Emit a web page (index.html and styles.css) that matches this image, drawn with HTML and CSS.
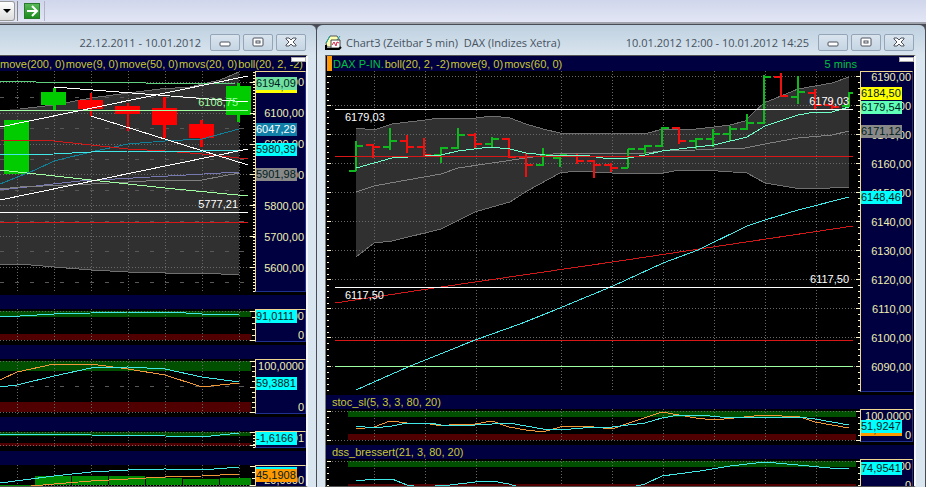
FILE: index.html
```html
<!doctype html>
<html lang="de">
<head>
	<meta charset="utf-8">
	<title>Chart3 DAX</title>
	<meta name="viewport" content="width=device-width">
	<link rel="stylesheet" href="styles.css">
</head>
<body>
	<div class="toolbar">
		<span class="combo"><select aria-label="Symbol"><option></option></select></span>
		<button class="go" aria-label="Los"><svg width="14" height="14" viewBox="0 0 14 14"><path d="M2 7h9M7 2l5 5-5 5" fill="none" stroke="#fff" stroke-width="2"/></svg></button>
	</div>

	<main class="workspace">
		<section class="window daily">
			<header class="titlebar">
				<span class="range">22.12.2011 - 10.01.2012</span>
				<button aria-label="Minimieren"><svg width="12" height="12" viewBox="0 0 12 12"><rect x="1" y="5" width="10" height="4" rx="1" class="glyph"/></svg></button>
				<button aria-label="Maximieren"><svg width="12" height="12" viewBox="0 0 12 12"><rect x="1" y="1" width="10" height="8" rx="1" class="glyph"/><rect x="4" y="4" width="4" height="2" class="glyph"/></svg></button>
				<button aria-label="Schließen"><svg width="12" height="12" viewBox="0 0 12 12"><path d="M1 1h3l2 2 2-2h3v1L8 5l3 3v1H8L6 7 4 9H1V8l3-3-3-3z" class="glyph"/></svg></button>
			</header>
			<div class="content">
				<div class="legend first">
					<span>move(20, 0)</span><span>move(200, 0)</span><span>move(9, 0)</span><span>move(50, 0)</span><span>movs(20, 0)</span><span>boll(20, 2, -2)</span>
					<i class="grip"></i>
				</div>
				<div class="pane">
					<div class="plot">
						<svg class="h224" viewBox="0 71 255 224" preserveAspectRatio="none">
							<path class="band" d="M0 110L20 109 54 105 91 98 128 93 160 89 190 87 220 80 239 72V275L202 273H165L128 272 91 270 54 267 20 264H0z"/>
							<path class="grid" d="M17 71V291M54 71V291M91 71V291M128 71V291M165 71V291M202 71V291M239 71V291M0 82H250M0 113H250M0 144H250M0 174H250M0 205H250M0 236H250M0 267H250"/>
							<path class="half" d="M0 97H250M0 128H250M0 159H250M0 190H250M0 221H250M0 251H250M0 282H250"/>
							<path class="edge" d="M20 109L54 105 91 98 128 93 160 89 190 87 220 80 239 72M0 264H20L54 267 91 270 128 272 165 273H202L239 275"/>
							<path class="up" d="M4 120H29V174H4zM41 92H66V105H41zM53 88H56V110H53zM226 86H251V115H226zM237 83H240V122H237z"/>
							<path class="down" d="M78 100H103V109H78zM90 93H92V116H90zM115 106H140V114H115zM127 103H129V131H127zM152 108H177V125H152zM163 97H166V138H163zM189 124H214V138H189zM200 120H203V147H200z"/>
							<path class="line teal" d="M0 184L35 170 54 161 91 152 128 144 165 141 202 139 239 129"/>
							<path class="line slate" d="M0 190L80 181 239 172"/>
							<path class="line grey" d="M0 189L20 187 91 184 128 182 165 180H202L239 173"/>
							<path class="line red" d="M0 140L54 141 128 149 165 151 202 154 239 158H248"/>
							<rect class="red-level" x="0" y="222" width="248" height="1"/>
							<path class="line cyan" d="M0 155L54 154 91 152 128 151H202L239 150"/>
							<path class="line mint" d="M0 81H35L36 82H145L146 83H235"/>
							<path class="line lime" d="M0 170L91 180 165 188 248 196"/>
							<rect class="lime-level" x="0" y="110" width="248" height="1"/>
							<path class="line white" d="M54 87L248 102M0 127L248 76M91 116L248 165M0 200L248 149"/>
							<rect class="white-level" x="0" y="212" width="248" height="1"/>
							<path class="minor" d="M254 72V293"/>
							<path class="major" d="M250 82H255M250 113H255M250 144H255M250 174H255M250 205H255M250 236H255M250 267H255"/>
						</svg>
						<span class="mark end lime-text" style="top:24px">6108,75</span>
						<span class="mark end" style="top:126px">5777,21</span>
					</div>
					<div class="scale">
						<ol class="prices step31">
							<li>6200,00</li><li>6100,00</li><li>6000,00</li><li>5900,00</li><li>5800,00</li><li>5700,00</li><li>5600,00</li>
						</ol>
						<span class="tag yellow" style="top:8px">6184,50</span>
						<span class="tag jade" style="top:5px">6194,09</span>
						<span class="tag blue" style="top:51px">6047,29</span>
						<span class="tag aqua" style="top:71px">5980,39</span>
						<span class="tag silver" style="top:96px">5901,98</span>
					</div>
				</div>
				<div class="legend"></div>
				<div class="pane">
					<div class="plot">
						<svg class="h36" viewBox="0 309 255 36" preserveAspectRatio="none">
							<path class="over" d="M0 311H251V317H0z"/>
							<path class="under" d="M0 334H251V340H0z"/>
							<path class="grid" d="M17 309V342M54 309V342M91 309V342M128 309V342M165 309V342M202 309V342M239 309V342M0 311H250M0 340H250"/>
							<path class="line cyan" d="M0 317L20 316 54 314 91 313 128 312H170L202 314H239"/>
							<path class="major" d="M250 311H255M252 317H255M252 323H255M252 329H255M252 335H255M250 340H255"/>
						</svg>
					</div>
					<div class="scale">
						<ol class="prices spread"><li>100,0000</li><li>0</li></ol>
						<span class="tag aqua" style="top:0px">91,0111</span>
					</div>
				</div>
				<div class="legend"></div>
				<div class="pane">
					<div class="plot">
						<svg class="h58" viewBox="0 359 255 58" preserveAspectRatio="none">
							<path class="over" d="M0 361H251V371H0z"/>
							<path class="under" d="M0 402H251V412H0z"/>
							<path class="grid" d="M17 359V414M54 359V414M91 359V414M128 359V414M165 359V414M202 359V414M239 359V414M0 361H250M0 412H250"/>
							<path class="half" d="M0 386H250"/>
							<path class="line orange" d="M0 380L17 372 54 364H91L128 369 165 375 202 387 239 383"/>
							<path class="line cyan" d="M0 387L17 385 54 376 91 368 128 367 165 369 202 377 239 382"/>
							<path class="major" d="M250 361H255M252 366H255M252 371H255M252 376H255M252 381H255M250 387H255M252 392H255M252 397H255M252 402H255M252 407H255M250 412H255"/>
						</svg>
					</div>
					<div class="scale">
						<ol class="prices spread"><li>100,0000</li><li>0</li></ol>
						<span class="tag aqua" style="top:17px">59,3881</span>
					</div>
				</div>
				<div class="legend"></div>
				<div class="pane">
					<div class="plot">
						<svg class="h20" viewBox="0 431 255 20" preserveAspectRatio="none">
							<path class="over" d="M0 432H251V436H0z"/>
							<path class="under" d="M0 443H251V446H0z"/>
							<path class="grid" d="M17 431V449M54 431V449M91 431V449M128 431V449M165 431V449M202 431V449M239 431V449M0 432H250M0 445H250"/>
							<path class="line cyan" d="M0 434H60L91 435 165 436 202 437 239 433"/>
							<path class="minor" d="M254 432V449"/>
							<path class="major" d="M250 432H255M250 445H255"/>
						</svg>
					</div>
					<div class="scale">
						<ol class="prices spread"><li>-4,0001</li></ol>
						<span class="tag aqua" style="top:0px">-1,6166</span>
					</div>
				</div>
				<div class="legend"></div>
				<div class="pane">
					<div class="plot">
						<svg class="h36" viewBox="0 465 255 36" preserveAspectRatio="none">
							<path class="grid" d="M17 465V501M54 465V501M91 465V501M128 465V501M165 465V501M202 465V501M239 465V501M0 485H250"/>
							<path class="volume" d="M0 485H34V487H0zM35 476H71V485H35zM72 476H108V485H72zM109 476H145V485H109zM146 478H182V485H146zM183 479H219V485H183zM220 478H251V485H220z"/>
							<path class="line cyan" d="M0 483L54 476 91 472 128 470 165 469 202 470 239 467"/>
							<path class="line orange" d="M0 487H20L54 484 91 481 128 479 165 477 202 476 239 474"/>
							<path class="major" d="M250 466H255M252 472H255M252 478H255M250 485H255"/>
						</svg>
					</div>
					<div class="scale">
						<ol class="prices low"><li>20,0000</li></ol>
						<span class="tag aqua" style="top:1px">50,5170</span>
						<span class="tag amber" style="top:3px">45,1908</span>
					</div>
				</div>
			</div>
		</section>

		<section class="window intraday">
			<header class="titlebar">
				<svg class="appicon" width="17" height="16" viewBox="0 0 17 16"><path d="M5 1h7l2 3v8H2L1 8z" fill="#ffffb0" stroke="#555"/><path d="M1 8l4-7M15 1l-3 4" fill="none" stroke="#1aa"/><path d="M6 5h9v8H6z" fill="#fff" stroke="#444"/><path d="M1 10v4h13l2-2" fill="none" stroke="#000" stroke-width="2"/><path d="M7 10l2-3 2 4 1-4 2 1" fill="none" stroke="#d24"/></svg>
				<h1>Chart3 (Zeitbar 5 min)&nbsp; DAX (Indizes Xetra)</h1>
				<span class="range">10.01.2012 12:00 - 10.01.2012 14:25</span>
				<button aria-label="Minimieren"><svg width="12" height="12" viewBox="0 0 12 12"><rect x="1" y="5" width="10" height="4" rx="1" class="glyph"/></svg></button>
				<button aria-label="Maximieren"><svg width="12" height="12" viewBox="0 0 12 12"><rect x="1" y="1" width="10" height="8" rx="1" class="glyph"/><rect x="4" y="4" width="4" height="2" class="glyph"/></svg></button>
				<button aria-label="Schließen"><svg width="12" height="12" viewBox="0 0 12 12"><path d="M1 1h3l2 2 2-2h3v1L8 5l3 3v1H8L6 7 4 9H1V8l3-3-3-3z" class="glyph"/></svg></button>
			</header>
			<div class="content">
				<div class="legend first">
					<b class="swatch"></b><span class="symbol">DAX P-IN.</span><span>boll(20, 2, -2)</span><span>move(9, 0)</span><span>movs(60, 0)</span>
					<span class="interval">5 mins</span>
					<i class="grip"></i>
				</div>
				<div class="pane">
					<div class="plot">
						<svg class="h324" viewBox="326 71 534 324" preserveAspectRatio="none">
							<path class="band" d="M356 128L374 130 392 124 425 120 440 118H476L492 116 510 118 526 124 543 129 560 133 577 134 612 133H648L663 129H696L714 127 730 125 745 121 755 111 764 103 781 96 798 89 815 86 832 83 849 77V187L830 188H795L765 183 747 173 703 170H680L663 173H612L577 171 560 173 527 191 510 202 492 207 475 212 441 229 392 241 374 243 356 257z"/>
							<path class="grid" d="M374 71V392M425 71V392M476 71V392M561 71V392M612 71V392M663 71V392M714 71V392M765 71V392M816 71V392M332 76H856M332 105H856M332 134H856M332 163H856M332 192H856M332 221H856M332 250H856M332 279H856M332 308H856M332 337H856M332 366H856"/>
							<path class="edge" d="M356 128L374 130 392 124 425 120 440 118H476L492 116 510 118 526 124 543 129 560 133 577 134 612 133H648L663 129H696L714 127 730 125 745 121 755 111 764 103 781 96 798 89 815 86 832 83 849 77M356 257L374 243 392 241 441 229 475 212 492 207 510 202 527 191 560 173 577 171 612 173H663L680 170H703L747 173 765 183 795 188H830L849 187"/>
							<path class="line grey" d="M356 192L374 186 407 180 441 174 458 168 492 163 526 158 560 153H645L662 151 696 150 714 149 745 148 765 144 798 138 832 135 849 131"/>
							<!-- open / high-low / close -->
							<path class="bar green" d="M349 171H356M356 141V171M356 146H363M383 147H390M390 128V150M390 141H397M434 155H441M441 147V163M441 148H448M451 148H458M458 128V149M458 135H465M485 144H492M492 137V148M492 139H499M536 165H543M543 148V166M543 155H550M553 158H560M560 155V167M560 155H567M621 168H628M628 149V168M628 149H635M638 149H645M645 145V154M645 146H652M655 146H662M662 127V147M662 128H669M689 141H696M696 138V149M696 139H703M706 139H713M713 129V147M713 134H720M723 134H730M730 126V141M730 129H737M740 129H747M747 114V130M747 123H754M757 123H764M764 75V124M764 77H771M791 97H798M798 76V104M798 92H805M842 106H849M849 92V107M849 93H853"/>
							<path class="bar scarlet" d="M366 145H373M373 144V158M373 147H380M400 141H407M407 135V153M407 147H414M417 147H424M424 138V156M424 155H431M468 135H475M475 133V148M475 144H482M502 139H509M509 138V158M509 157H516M519 157H526M526 153V177M526 165H533M570 156H577M577 154V164M577 161H584M587 161H594M594 160V178M594 165H601M604 165H611M611 163V172M611 168H618M672 128H679M679 127V144M679 141H686M774 77H781M781 73V97M781 96H788M808 93H815M815 89V110M815 105H822M825 105H832M832 100V109M832 107H839"/>
							<path class="line sea" d="M356 168L374 163 392 158 441 155 458 151 490 147 510 149 526 153 545 155 590 156 609 159 628 158 645 155 662 151 696 147 714 145 747 137 765 126 798 115 815 112H832L849 107"/>
							<path class="line red" d="M335 303L441 287 626 260 853 226"/>
							<rect class="red-level" x="335" y="156" width="518" height="1"/>
							<rect class="red-level" x="335" y="340" width="518" height="1"/>
							<path class="line cyan" d="M356 390L374 382 408 367 475 340 520 324 555 310 613 286 663 263 698 250 747 226 765 220 798 210 849 197"/>
							<rect class="lime-level" x="335" y="366" width="518" height="1"/>
							<rect class="white-level" x="335" y="109" width="518" height="1"/>
							<rect class="white-level" x="335" y="287" width="518" height="1"/>
							<path class="minor wide" d="M328 76V392M859 76V392"/>
							<path class="major" d="M327 76H331M327 105H331M327 134H331M327 163H331M327 192H331M327 221H331M327 250H331M327 279H331M327 308H331M327 337H331M327 366H331M856 76H860M856 105H860M856 134H860M856 163H860M856 192H860M856 221H860M856 250H860M856 279H860M856 308H860M856 337H860M856 366H860"/>
						</svg>
						<span class="mark start" style="top:39px">6179,03</span>
						<span class="mark end" style="top:23px">6179,03</span>
						<span class="mark start" style="top:217px">6117,50</span>
						<span class="mark end" style="top:201px">6117,50</span>
					</div>
					<div class="scale">
						<ol class="prices step29">
							<li>6190,00</li><li>6180,00</li><li>6170,00</li><li>6160,00</li><li>6150,00</li><li>6140,00</li><li>6130,00</li><li>6120,00</li><li>6110,00</li><li>6100,00</li><li>6090,00</li>
						</ol>
						<span class="tag yellow" style="top:15px">6184,50</span>
						<span class="tag mintgreen" style="top:29px">6179,54</span>
						<span class="tag silver" style="top:53px">6171,12</span>
						<span class="tag aqua" style="top:119px">6148,46</span>
					</div>
				</div>
				<div class="legend"><span>stoc_sl(5, 3, 3, 80, 20)</span></div>
				<div class="pane">
					<div class="plot">
						<svg class="h36" viewBox="326 409 534 36" preserveAspectRatio="none">
							<path class="over" d="M348 411H856V417H348z"/>
							<path class="under" d="M348 434H856V440H348z"/>
							<path class="grid" d="M374 409V442M425 409V442M476 409V442M561 409V442M612 409V442M663 409V442M714 409V442M765 409V442M816 409V442M332 411H856M332 440H856"/>
							<path class="line orange" d="M356 429L374 427 390 421 407 423H425L441 426 458 424H475L492 421 509 427 526 430 543 432 560 427 577 426 594 427 612 429 635 421 662 412 696 418 714 420 764 415 800 417 815 422 849 428"/>
							<path class="line cyan" d="M356 426L374 428 392 426 407 423H430L441 425H475L509 423 543 429 560 430 594 427H612L645 423 662 418 679 415H700L730 418 764 417H798L815 419 849 425"/>
							<path class="major" d="M327 411H331M327 417H329M327 423H329M327 429H329M327 435H329M327 440H331M856 411H860M858 417H860M858 423H860M858 429H860M858 435H860M856 440H860"/>
						</svg>
					</div>
					<div class="scale">
						<ol class="prices spread"><li>100,0000</li><li>0</li></ol>
						<span class="tag amber" style="top:13px">42,7878</span>
						<span class="tag aqua" style="top:10px">51,9247</span>
					</div>
				</div>
				<div class="legend"><span>dss_bressert(21, 3, 80, 20)</span></div>
				<div class="pane">
					<div class="plot">
						<svg class="h36" viewBox="326 459 534 36" preserveAspectRatio="none">
							<path class="over" d="M348 461H856V467H348z"/>
							<path class="under" d="M348 484H856V490H348z"/>
							<path class="grid" d="M374 459V492M425 459V492M476 459V492M561 459V492M612 459V492M663 459V492M714 459V492M765 459V492M816 459V492M332 461H856M332 490H856"/>
							<path class="line cyan" d="M356 481L374 479H392L407 485 420 487 450 485 475 482 492 481 509 484 526 489 611 490 632 487 645 484 662 476 700 471 730 466 765 462 798 465 830 468H849"/>
							<path class="major" d="M327 461H331M327 467H329M327 473H329M327 479H329M327 485H329M856 461H860M858 467H860M858 473H860M858 479H860M858 485H860"/>
						</svg>
					</div>
					<div class="scale">
						<ol class="prices spread"><li>100,0000</li><li>0</li></ol>
						<span class="tag aqua" style="top:2px">74,9541</span>
					</div>
				</div>
			</div>
		</section>
	</main>
</body>
</html>
```
FILE: styles.css
```css
* {
    box-sizing: border-box;
}
html, body {
    margin: 0;
    height: 100%;
}
body {
    display: flex;
    flex-direction: column;
    overflow: hidden;
    background: #d9e5ef;
    font: 11px/14px "Liberation Sans", Arial, sans-serif;
}
button {
    padding: 0;
    display: flex;
    align-items: center;
    justify-content: center;
}
.toolbar {
    display: flex;
    align-items: center;
    flex: none;
    height: 22px;
    background: linear-gradient(#d0d6eb, #e2e6f5);
}
.combo {
    position: relative;
    width: 18px;
    height: 20px;
    border-right: 1px solid #888;
}
.combo select {
    appearance: none;
    width: 15px;
    height: 20px;
    border: 1px solid #999;
    border-left: 0;
    border-radius: 0 3px 3px 0;
    background: linear-gradient(#fff, #ddd);
}
.combo::after {
    content: "";
    position: absolute;
    left: 3px;
    top: 8px;
    border: 4px solid transparent;
    border-top-color: #000;
    border-bottom: 0;
}
.go {
    width: 16px;
    height: 16px;
    margin: 0 4px 0 6px;
    border: 1px solid #2b7a2b;
    background: linear-gradient(#58b858, #1c8c1c);
}
.toolbar::after {
    content: "";
    height: 20px;
    border-left: 1px solid #b0b4c4;
}

/* windows */
.workspace {
    flex: 1;
    min-height: 0;
    display: grid;
    grid-template-columns: minmax(0, 317fr) minmax(0, 609fr);
    border-top: 2px solid #a0a2ac;
    background: #494b55;
}
.window {
    display: flex;
    flex-direction: column;
    min-width: 0;
    margin-right: 1px;
    padding-right: 8px;
    border-top: 1px solid #494b55;
    border-radius: 0 6px 0 0;
    background: linear-gradient(#bfd0e0, #d9e5ef 30px);
    overflow: hidden;
}
.intraday {
    padding: 0 9px 0 8px;
    border-radius: 6px 6px 0 0;
}
.titlebar {
    display: flex;
    align-items: center;
    gap: 3px;
    flex: none;
    height: 30px;
    padding-top: 5px;
    padding-right: 2px;
    color: #46525e;
    font: 11px/16px "Open Sans", "Noto Sans", sans-serif;
    white-space: nowrap;
}
.titlebar h1 {
    margin: 0;
    font-size: 11px;
    font-weight: normal;
}
.titlebar .range {
    margin-left: auto;
    margin-right: 6px;
}
.titlebar button {
    width: 30px;
    height: 17px;
    border: 1px solid #94a5b8;
    border-radius: 2px;
    background: linear-gradient(#d9e4ee, #c6d5e3);
}
.glyph {
    fill: #fff;
    stroke: #4d535e;
}
.appicon {
    margin-right: 1px;
}
.content {
    flex: 1;
    min-height: 0;
    border: 1px solid #555;
    border-left: 0;
    border-right: 2px solid #f6f8fa;
    background: #000;
    overflow: hidden;
}
.intraday .content {
    border-left: 1px solid #777;
}

/* charts */
.legend {
    position: relative;
    display: flex;
    gap: 1px;
    height: 14px;
    padding-left: 6px;
    background: #000040;
    color: #c8c832;
    white-space: nowrap;
}
.legend.first {
    height: 15px;
    padding-left: 1px;
    line-height: 16px;
}
.daily .legend.first {
    justify-content: flex-end;
    padding-right: 3px;
}
.grip {
    position: absolute;
    right: 0;
    top: 1px;
    width: 15px;
    height: 5px;
    border: 1px solid #aaa;
    background: #fff;
}
.swatch {
    width: 5px;
    background: #f90;
}
.symbol, .interval {
    color: #00c040;
}
.interval {
    margin-left: auto;
    margin-right: 57px;
}
.pane {
    display: grid;
    grid-template-columns: minmax(0, 1fr) 51px;
}
.intraday .pane {
    grid-template-columns: minmax(0, 1fr) 54px;
}
.plot {
    position: relative;
}
.plot svg {
    display: block;
    width: 100%;
    shape-rendering: crispEdges;
}
.plot path {
    vector-effect: non-scaling-stroke;
    fill: none;
}
.h324 { height: 324px; }
.h224 { height: 224px; }
.h58 { height: 58px; }
.h36 { height: 36px; }
.h20 { height: 20px; }
.plot .band { fill: #303030; }
.plot .over { fill: #005000; }
.plot .under { fill: #500000; }
.plot .volume { fill: #008800; }
.plot .up { fill: #00cc00; }
.plot .down { fill: #ff0000; }
.grid {
    stroke: #686868;
    stroke-dasharray: 1 2;
}
.half {
    stroke: #585858;
    stroke-dasharray: 4 11;
}
.edge { stroke: #707070; }
.line { stroke-width: 1px; }
.white { stroke: #fff; }
.red { stroke: #d01818; }
.cyan { stroke: #40e8e8; }
.teal { stroke: #108098; }
.slate { stroke: #7878b0; }
.grey { stroke: #808080; }
.mint { stroke: #60d080; }
.lime { stroke: #a0ffa0; }
.sea { stroke: #70ffc8; }
.orange { stroke: #f09838; }
.red-level { fill: #d81818; }
.lime-level { fill: #a0ffa0; }
.white-level { fill: #fff; }
.bar { stroke-width: 2px; }
.green { stroke: #10b820; }
.scarlet { stroke: #f01010; }
.major { stroke: #fff8d0; }
.minor {
    stroke: #fff8d0;
    stroke-width: 2px;
    stroke-dasharray: 1 2;
}
.minor.wide {
    stroke-dasharray: 1 5 1 5 1 5 1 5 1 4;
}
.mark {
    position: absolute;
    color: #fff;
}
.mark.start { left: 19px; }
.mark.end { right: 17px; }
.intraday .mark.end { right: 11px; }
.lime-text { color: #a0ffa0; }

/* price axis */
.scale {
    position: relative;
    margin-bottom: 3px;
    border: 1px solid #203090;
    border-left-color: #f0d890;
    border-top-color: #f0d890;
    background: #000040;
}
.intraday .scale {
    margin-right: 1px;
}
.prices {
    margin: 0;
    padding: 0 1px 0 0;
    list-style: none;
    text-align: right;
    color: #f0f0b0;
}
.step31 {
    margin-top: -5px;
    line-height: 31px;
}
.step29 {
    margin-top: -9px;
    line-height: 29px;
}
.spread {
    display: flex;
    flex-direction: column;
    justify-content: space-between;
    height: 100%;
    line-height: 12px;
}
.low {
    padding-top: 7px;
}
.tag {
    position: absolute;
    left: 0;
    width: 41px;
    height: 13px;
    line-height: 13px;
    color: #002020;
}
.yellow { background: #ffff00; }
.jade { background: #70e0a0; }
.mintgreen { background: #60ffb8; }
.blue { background: #1080a8; color: #fff; }
.aqua { background: #00ffff; }
.silver { background: #888; }
.amber { background: #ff9900; }
```
